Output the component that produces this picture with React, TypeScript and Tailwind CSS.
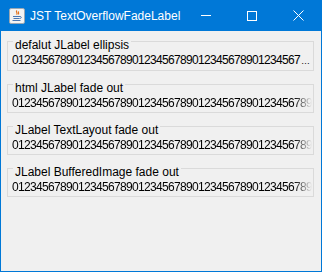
import type { ReactNode } from 'react';

// Swing demo window: four titled panels, each showing a long digit string
// that either ends with an ellipsis or fades out at the right edge.

const panels: { title: string; mode: 'ellipsis' | 'fade' }[] = [
  { title: 'defalut JLabel ellipsis', mode: 'ellipsis' },
  { title: 'html JLabel fade out', mode: 'fade' },
  { title: 'JLabel TextLayout fade out', mode: 'fade' },
  { title: 'JLabel BufferedImage fade out', mode: 'fade' },
];

const digitFont = { fontFamily: '"Liberation Sans Narrow", "Liberation Sans", sans-serif' };

// each digit sits in its own 6px cell, like the fixed pitch of the original
function Digits({ text }: { text: string }) {
  return (
    <>
      {text.split('').map((c, i) => (
        <span key={i} className="inline-block w-[6px] shrink-0 text-center">
          {c}
        </span>
      ))}
    </>
  );
}

function JavaIcon() {
  return (
    <svg width="16" height="16" viewBox="0 0 16 16" className="shrink-0">
      <rect x="0.5" y="0.5" width="15" height="15" rx="1.5" fill="#f3f3f3" stroke="#9aa7b3" />
      <path d="M8 2.5c-2 1.6 1.4 2.4-.4 4.2M9.8 3.6c-1.3 1 .8 1.6-.6 2.8" stroke="#e5731c" strokeWidth="1.2" fill="none" />
      <path d="M4 8.5h7M4.5 10.5h6M3.5 12.5h8" stroke="#4a78b5" strokeWidth="1" />
      <path d="M11 8.5c1.8 0 1.8 2-.3 2" stroke="#4a78b5" strokeWidth="1" fill="none" />
    </svg>
  );
}

function Panel({ title, children }: { title: string; children: ReactNode }) {
  return (
    <fieldset className="border border-[#dadada] min-w-0">
      <legend className="ml-[5px] px-[2px] pt-[7px] text-[12px] leading-[14px] text-black">{title}</legend>
      <div className="pl-[4px] pr-px pb-px">{children}</div>
    </fieldset>
  );
}

export default function App() {
  return (
    <div
      className="w-[322px] h-[272px] flex flex-col bg-[#0078d7] px-px pb-px"
      style={{ fontFamily: '"Liberation Sans", Arial, sans-serif' }}
    >
      <div className="h-[31px] flex items-center text-white">
        <div className="ml-[8px] mt-px">
          <JavaIcon />
        </div>
        <div className="ml-[5px] text-[12px] leading-none">JST TextOverflowFadeLabel</div>
        <div className="ml-auto flex items-center">
          <div className="w-[46px] h-[30px] flex items-center justify-center">
            <div className="w-[10px] h-px bg-white" />
          </div>
          <div className="w-[46px] h-[30px] flex items-center justify-center">
            <div className="w-[10px] h-[10px] border border-white" />
          </div>
          <div className="w-[46px] h-[30px] flex items-center justify-center">
            <svg width="11" height="11" viewBox="0 0 11 11">
              <path d="M0.5 0.5l10 10M10.5 0.5l-10 10" stroke="white" strokeWidth="1" />
            </svg>
          </div>
        </div>
      </div>
      <div className="flex-1 bg-[#f0f0f0] pl-[6px] pr-[7px] flex flex-col gap-[3px]">
        {panels.map((p) => (
          <Panel key={p.title} title={p.title}>
            {p.mode === 'ellipsis' ? (
              <div
                className="flex items-baseline text-[12px] leading-[16px] whitespace-nowrap overflow-hidden text-black"
                style={digitFont}
              >
                <Digits text={'0123456789'.repeat(4) + '01234567'} />
                <span className="ml-px text-[9px] tracking-[-0.5px]">…</span>
              </div>
            ) : (
              <div
                className="flex text-[12px] leading-[16px] whitespace-nowrap overflow-hidden text-black [mask-image:linear-gradient(to_right,black_calc(100%-18px),transparent)]"
                style={digitFont}
              >
                <Digits text={'0123456789'.repeat(5)} />
              </div>
            )}
          </Panel>
        ))}
      </div>
    </div>
  );
}
